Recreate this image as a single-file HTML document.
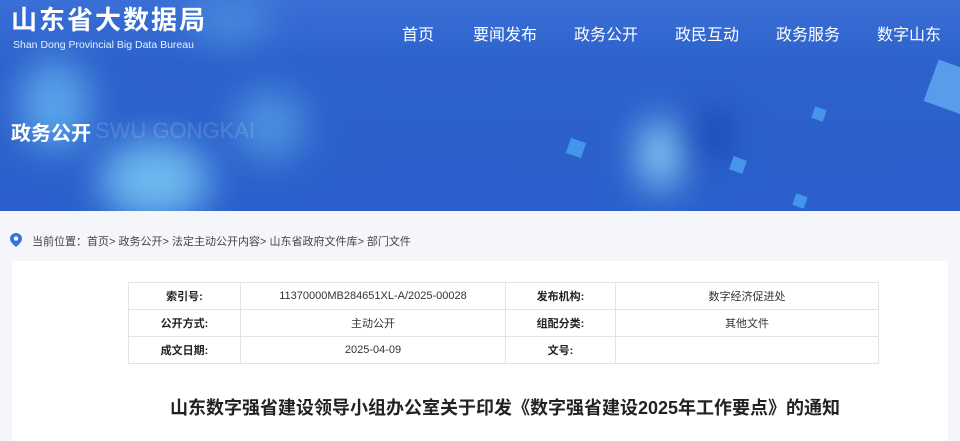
<!DOCTYPE html>
<html><head><meta charset="utf-8"><style>
*{margin:0;padding:0;box-sizing:border-box}
body{width:960px;height:433px;overflow:hidden;background:#f4f6fa;font-family:"Liberation Sans","Noto Sans CJK SC",sans-serif;position:relative}
.banner{position:absolute;left:0;top:0;width:960px;height:211px;background:linear-gradient(180deg,#3a6fd6 0%,#2d62cc 30%,#2b60cc 100%);overflow:hidden}
.blob{position:absolute;border-radius:50%;filter:blur(18px)}
.logo{position:absolute;left:11px;top:3px;color:#fff;font-size:26px;line-height:34px;font-weight:bold;letter-spacing:2px}
.sub{position:absolute;left:13px;top:39px;color:#e8f0ff;font-size:10.5px}
.nav{position:absolute;top:21px;color:#fff;font-size:16px}
.ttl{position:absolute;left:11px;top:117px;color:#fff;font-size:20px;font-weight:bold}
.en{position:absolute;left:95px;top:118px;color:rgba(255,255,255,.14);font-size:22px}
.cube{position:absolute;background:#4aa0f0;transform:rotate(20deg);opacity:.85}
.bc{position:absolute;left:32px;top:233px;font-size:11px;color:#444}
.box{position:absolute;left:12px;top:261px;width:936px;height:180px;background:#fff}
table{position:absolute;left:128px;top:282px;border-collapse:collapse;font-size:11px;color:#333}
td{border:1px solid #e3e3e3;height:27px;text-align:center}
td.k{font-weight:bold;color:#222}
h1{position:absolute;left:0;width:1010px;top:394px;text-align:center;font-size:18px;color:#222}
</style></head><body>
<div class="banner">
<div class="blob" style="left:20px;top:60px;width:70px;height:90px;background:#5aa4ea"></div>
<div class="blob" style="left:100px;top:140px;width:110px;height:80px;background:#6cb8ee"></div>
<div class="blob" style="left:235px;top:90px;width:70px;height:70px;background:#4c92e0"></div>
<div class="blob" style="left:190px;top:0px;width:80px;height:40px;background:#4a8ee0"></div>
<div class="blob" style="left:640px;top:120px;width:40px;height:70px;background:#8fd2f4"></div>
<div class="blob" style="left:700px;top:110px;width:30px;height:50px;background:#1540a8"></div>
<div class="cube" style="left:568px;top:140px;width:16px;height:16px"></div>
<div class="cube" style="left:731px;top:158px;width:14px;height:14px"></div>
<div class="cube" style="left:813px;top:108px;width:12px;height:12px"></div>
<div class="cube" style="left:794px;top:195px;width:12px;height:12px"></div>
<div class="cube" style="left:930px;top:65px;width:40px;height:44px;background:#5fa8f0"></div>
<div class="logo">山东省大数据局</div>
<div class="sub">Shan Dong Provincial Big Data Bureau</div>
<div class="nav" style="left:402px">首页</div>
<div class="nav" style="left:473px">要闻发布</div>
<div class="nav" style="left:574px">政务公开</div>
<div class="nav" style="left:675px">政民互动</div>
<div class="nav" style="left:776px">政务服务</div>
<div class="nav" style="left:877px">数字山东</div>
<div class="en">SWU GONGKAI</div>
<div class="ttl">政务公开</div>
</div>
<svg style="position:absolute;left:10px;top:233px" width="12" height="14" viewBox="0 0 12 14"><path d="M6 0C2.7 0 0 2.6 0 5.8 0 9.8 6 14 6 14s6-4.2 6-8.2C12 2.6 9.3 0 6 0z" fill="#3a6fe0"/><circle cx="6" cy="5.6" r="2.2" fill="#fff"/></svg>
<div class="bc">当前位置：首页&gt; 政务公开&gt; 法定主动公开内容&gt; 山东省政府文件库&gt; 部门文件</div>
<div class="box"></div>
<table>
<tr><td class="k" style="width:112px">索引号:</td><td style="width:265px">11370000MB284651XL-A/2025-00028</td><td class="k" style="width:110px">发布机构:</td><td style="width:263px">数字经济促进处</td></tr>
<tr><td class="k">公开方式:</td><td>主动公开</td><td class="k">组配分类:</td><td>其他文件</td></tr>
<tr><td class="k">成文日期:</td><td>2025-04-09</td><td class="k">文号:</td><td></td></tr>
</table>
<h1>山东数字强省建设领导小组办公室关于印发《数字强省建设2025年工作要点》的通知</h1>
</body></html>
